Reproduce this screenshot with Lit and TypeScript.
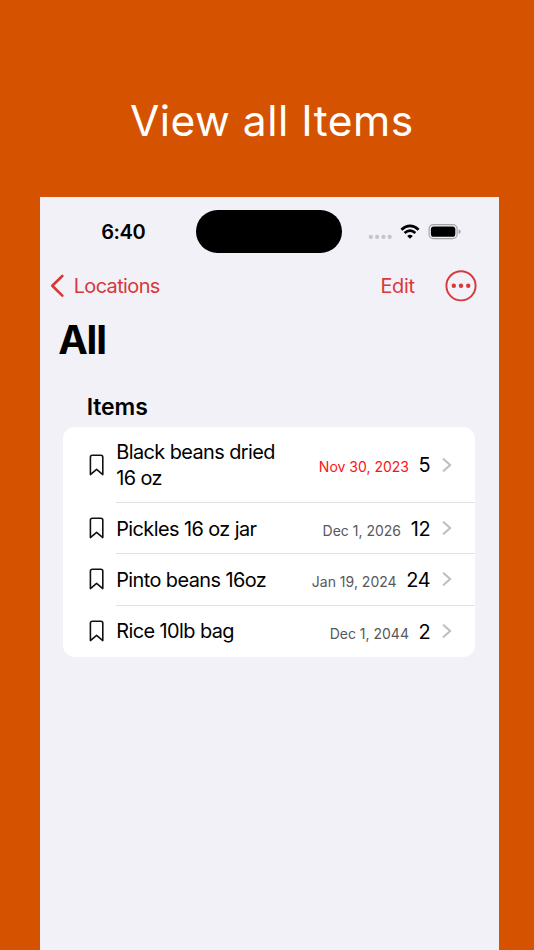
import { LitElement, html, css, svg } from "lit";
import { customElement, property } from "lit/decorators.js";
import { classMap } from "lit/directives/class-map.js";

interface Item {
  name: string;
  date: string;
  count: number;
  expired?: boolean;
}

const ITEMS: Item[] = [
  { name: "Black beans dried 16 oz", date: "Nov 30, 2023", count: 5, expired: true },
  { name: "Pickles 16 oz jar", date: "Dec 1, 2026", count: 12 },
  { name: "Pinto beans 16oz", date: "Jan 19, 2024", count: 24 },
  { name: "Rice 10lb bag", date: "Dec 1, 2044", count: 2 },
];

@customElement("item-row")
export class ItemRow extends LitElement {
  @property({ attribute: false }) item!: Item;

  static styles = css`
    :host {
      display: block;
    }
    .row {
      display: flex;
      align-items: center;
      box-sizing: border-box;
      min-height: 51.4px;
      padding-left: 26px;
    }
    .mark {
      flex: none;
      width: 15px;
      height: 22px;
      margin-right: 12px;
    }
    .body {
      flex: 1;
      display: flex;
      align-items: center;
      box-sizing: border-box;
      min-height: 51.4px;
      padding: 12px 23px 12px 0;
    }
    .name {
      width: 180px;
      padding-top: 1.4px;
      margin-bottom: -1.4px;
      line-height: 25.7px;
      font-size: 19.9px;
      letter-spacing: -0.57px;
    }
    .meta {
      flex: 1;
      display: flex;
      align-items: baseline;
      justify-content: flex-end;
      white-space: nowrap;
      line-height: 25.7px;
      padding-top: 2px;
      margin-bottom: -2px;
    }
    .date {
      font-size: 14px;
      color: #58585a;
      margin-right: 9.6px;
    }
    .date.expired {
      color: #fb1411;
    }
    .count {
      font-size: 19.9px;
      letter-spacing: -0.2px;
    }
    .chevron {
      flex: none;
      width: 10px;
      height: 16px;
      margin-left: 12px;
    }
  `;

  render() {
    const { name, date, count, expired } = this.item;
    return html`
      <div class="row">
        <svg class="mark" viewBox="0 0 15 22">
          <path d="M1.4 20.6V3.2Q1.4 1.2 3.4 1.2H11.8Q13.8 1.2 13.8 3.2V20.6L7.6 15.4Z" fill="none" stroke="#111" stroke-width="1.6" stroke-linejoin="round" />
        </svg>
        <div class="body">
          <div class="name">${name}</div>
          <div class="meta">
            <span class=${classMap({ date: true, expired: !!expired })}>${date}</span>
            <span class="count">${count}</span>
          </div>
          <svg class="chevron" viewBox="0 0 10 16">
            <path d="M1.7 2.2L8.2 8L1.7 13.8" fill="none" stroke="#bfbfc2" stroke-width="2.1" stroke-linecap="round" stroke-linejoin="round" />
          </svg>
        </div>
      </div>
    `;
  }
}

@customElement("app-root")
export class AppRoot extends LitElement {
  static styles = css`
    :host {
      display: flex;
      flex-direction: column;
      box-sizing: border-box;
      height: 950px;
      overflow: hidden;
      padding: 0 35px 0 39.7px;
      background: #d55300;
      color: #000;
      font-family: Inter, "Liberation Sans", sans-serif;
    }
    .headline {
      flex: none;
      height: 197px;
      box-sizing: border-box;
      padding: 94px 0 0 5px;
      margin: 0;
      text-align: center;
      color: #fff;
      font-size: 42.5px;
      line-height: 54px;
      font-weight: 380;
      letter-spacing: 0.5px;
      white-space: nowrap;
    }
    .screen {
      flex: 1;
      background: #f2f1f7;
    }
    .status {
      display: flex;
      align-items: center;
      height: 43px;
      padding-top: 13px;
    }
    .time {
      width: 156px;
      text-indent: 61.5px;
      font-size: 20px;
      font-weight: 600;
      letter-spacing: -0.4px;
    }
    .island {
      width: 146px;
      height: 43px;
      border-radius: 22px;
      background: #000;
    }
    .signals {
      width: 96px;
      height: 24px;
      margin-left: 25px;
    }
    .nav {
      display: flex;
      align-items: center;
      height: 60px;
      margin-top: 3px;
      color: #d7393a;
      font-size: 19.9px;
    }
    .back {
      width: 16px;
      height: 24px;
      margin: 0 8px 0 10px;
    }
    .link {
      letter-spacing: -0.6px;
    }
    .edit {
      margin-left: auto;
      letter-spacing: -0.3px;
    }
    .more {
      width: 34px;
      height: 34px;
      margin: 0 20.7px 0 29.6px;
    }
    .title {
      margin: 0;
      padding: 0 18.5px;
      height: 48px;
      line-height: 48px;
      font-size: 39.7px;
      font-weight: 700;
      letter-spacing: -1.2px;
    }
    .section {
      margin: 0;
      padding: 27.6px 47px 0;
      height: 35.4px;
      line-height: 30px;
      font-size: 23px;
      font-weight: 600;
      letter-spacing: -0.1px;
    }
    .card {
      width: 412.3px;
      margin: 0 0 0 23.5px;
      border-radius: 11.7px;
      background: #fff;
      overflow: hidden;
    }
    .line {
      height: 1px;
      margin: -0.5px 0 -0.5px 53px;
      background: #e2e2e4;
    }
  `;

  render() {
    return html`
      <h1 class="headline">View all Items</h1>
      <main class="screen">
        <div class="status">
          <span class="time">6:40</span>
          <div class="island"></div>
          <svg class="signals" viewBox="0 0 96 24">
            ${[3.8, 10.1, 16.4, 22.7].map((x) => svg`<circle cx=${x} cy="16.9" r="2.1" fill="#c5c4ca" />`)}
            <g fill="none" stroke="#000" stroke-width="2.7">
              <path d="M34.4 9.7Q43 2.2 51.6 9.7" />
              <path d="M37.6 13Q43 8.3 48.4 13" />
            </g>
            <path d="M40.2 15.9Q43 13.5 45.8 15.9L43 18.8Z" />
            <rect x="62.1" y="4.6" width="28" height="14" rx="4.4" fill="none" stroke="#a3a3a7" stroke-width="1.2" />
            <rect x="63.9" y="6.4" width="24.4" height="10.4" rx="2.9" />
            <path d="M91.6 9.3Q93.7 10 93.7 11.6Q93.7 13.2 91.6 13.9Z" fill="#a3a3a7" />
          </svg>
        </div>
        <nav class="nav">
          <svg class="back" viewBox="0 0 16 24">
            <path d="M12.3 2L2.3 11.8L12.3 21.6" fill="none" stroke="currentColor" stroke-width="2.7" stroke-linecap="round" stroke-linejoin="round" />
          </svg>
          <span class="link">Locations</span>
          <span class="edit">Edit</span>
          <svg class="more" viewBox="0 0 34 34" fill="currentColor">
            <circle cx="17" cy="16.8" r="14.6" fill="none" stroke="currentColor" stroke-width="1.9" />
            <circle cx="9.8" cy="16.8" r="2.2" />
            <circle cx="17" cy="16.8" r="2.2" />
            <circle cx="24.2" cy="16.8" r="2.2" />
          </svg>
        </nav>
        <h2 class="title">All</h2>
        <h3 class="section">Items</h3>
        <div class="card">
          ${ITEMS.map(
            (item, i) => html`
              ${i ? html`<div class="line"></div>` : ""}
              <item-row .item=${item}></item-row>
            `,
          )}
        </div>
      </main>
    `;
  }
}
